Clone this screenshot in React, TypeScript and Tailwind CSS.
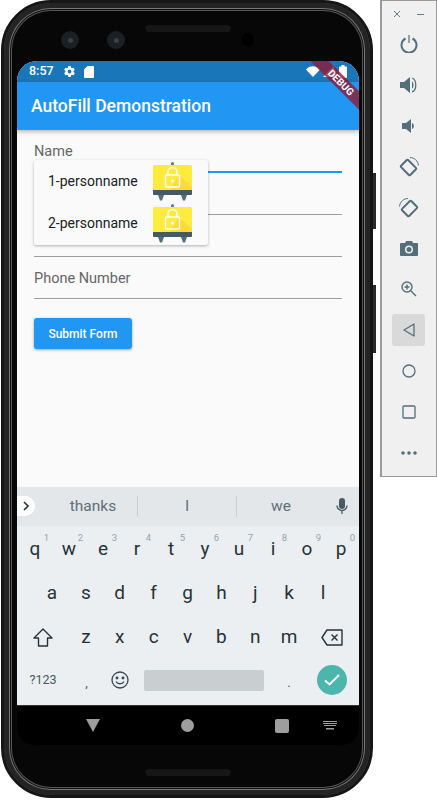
import React from 'react'

const row1 = [['q', '1'], ['w', '2'], ['e', '3'], ['r', '4'], ['t', '5'], ['y', '6'], ['u', '7'], ['i', '8'], ['o', '9'], ['p', '0']]
const row2 = ['a', 's', 'd', 'f', 'g', 'h', 'j', 'k', 'l']
const row3 = ['z', 'x', 'c', 'v', 'b', 'n', 'm']

const LockIcon = () => (
    <svg width="40" height="40" viewBox="0 0 40 40" className="shrink-0">
        <rect x="18" y="1" width="3" height="5" rx="1.5" fill="#607d8b" />
        <path d="M5 34 L7 39.500 L9 39.500 L11 34Z M34 34 L32 39.500 L30 39.500 L28 34Z" fill="#546e7a" />
        <path d="M0 5.500 a1.500 1.500 0 0 1 1.500 -1.500 h36 a1.500 1.500 0 0 1 1.500 1.500 V29 H0Z" fill="#ffeb3b" />
        <path d="M26 14 L39 26 V29 H17Z" fill="#fbc02d" opacity="0.4" />
        <path d="M0 29 H39 V33 a1 1 0 0 1 -1 1 H1 a1 1 0 0 1 -1 -1Z" fill="#455a64" />
        <rect x="12.500" y="14" width="14" height="12" rx="1.500" fill="none" stroke="#ffffff" strokeWidth="1.500" />
        <path d="M15 14 V11 a4.500 4.500 0 0 1 9 0 V14" fill="none" stroke="#ffffff" strokeWidth="1.500" />
        <circle cx="19.500" cy="20" r="1.500" fill="#ffffff" />
    </svg>
)

const Field = ({ label, line }: { label?: string; line: string }) => (
    <div className={`h-[42px] flex flex-col justify-end ${line}`}>
        {label && <span className="text-[14.5px] leading-[20px] text-[#666] mb-[9px]">{label}</span>}
    </div>
)

const Key = ({ k, sup }: { k: string; sup?: string }) => (
    <div className="relative flex-1 flex items-center justify-center text-[19px] text-[#263238]">
        {k}
        {sup && <span className="absolute right-[3px] top-[3px] text-[9.5px] text-[#90a4ae]">{sup}</span>}
    </div>
)

const Tool = ({ children, active }: { children: React.ReactNode; active?: boolean }) => (
    <div className={`h-[32px] w-[33px] flex items-center justify-center rounded-[3px] ${active ? 'bg-[#d9d9d9]' : ''}`}>
        {children}
    </div>
)

const App: React.FC = () => {
    return (
        <div className="w-[437px] h-[800px] bg-white flex items-start overflow-hidden font-['Roboto',sans-serif]">
            <div className="relative ml-[1px] w-[372px] h-[798px] rounded-[50px] bg-[#070707] border-[3px] border-[#161616] shadow-[inset_0_0_0_5px_#242424,inset_0_0_0_6px_#777,inset_0_0_0_7px_#111,inset_0_0_0_8px_#555] pt-[58px] px-[13px] shrink-0">
                {/* camera + speakers */}
                <span className="absolute left-[57px] top-[28px] w-[18px] h-[18px] rounded-full bg-[#1b2025] flex items-center justify-center">
                    <span className="w-[5px] h-[5px] rounded-full bg-[#3a4046]" />
                </span>
                <span className="absolute left-[103px] top-[28px] w-[18px] h-[18px] rounded-full bg-[#1b2025] flex items-center justify-center">
                    <span className="w-[5px] h-[5px] rounded-full bg-[#3a4046]" />
                </span>
                <span className="absolute left-[237px] top-[30px] w-[13px] h-[13px] rounded-full bg-black" />
                <span className="absolute left-[141px] top-[22px] w-[86px] h-[7px] rounded-full bg-[#161616]" />
                <span className="absolute left-[141px] top-[766px] w-[86px] h-[7px] rounded-full bg-[#161616]" />
                {/* side buttons */}
                <span className="absolute left-[369px] top-[170px] w-[3px] h-[56px] bg-[#2a2a2a]" />
                <span className="absolute left-[369px] top-[282px] w-[3px] h-[68px] bg-[#2a2a2a]" />

                <div className="relative w-[342px] h-[644px] rounded-t-[20px] overflow-hidden bg-[#fafafa] flex flex-col">
                    {/* status bar */}
                    <div className="h-[21px] bg-[#1976b8] flex items-center px-[12px] text-white shrink-0">
                        <span className="text-[12.5px] font-medium mr-[9px]">8:57</span>
                        <svg width="13" height="13" viewBox="0 0 24 24" fill="white" className="mr-[8px]">
                            <path d="M19.4 13c.04-.3.06-.65.06-1s-.02-.7-.07-1l2.1-1.65a.5.5 0 0 0 .12-.64l-2-3.46a.5.5 0 0 0-.6-.22l-2.5 1a7.3 7.3 0 0 0-1.7-1l-.37-2.65A.5.5 0 0 0 14 2h-4a.5.5 0 0 0-.5.42l-.37 2.65c-.6.25-1.17.58-1.7 1l-2.5-1a.5.5 0 0 0-.6.22l-2 3.46a.5.5 0 0 0 .12.64L4.57 11a8 8 0 0 0 0 2l-2.1 1.65a.5.5 0 0 0-.12.64l2 3.46c.12.22.38.3.6.22l2.5-1c.53.4 1.1.74 1.7 1l.37 2.65A.5.5 0 0 0 10 22h4a.5.5 0 0 0 .5-.42l.37-2.65c.6-.25 1.17-.58 1.7-1l2.5 1c.22.08.48 0 .6-.22l2-3.46a.5.5 0 0 0-.12-.64ZM12 15.5a3.5 3.5 0 1 1 0-7 3.5 3.5 0 0 1 0 7Z" />
                        </svg>
                        <svg width="10" height="12" viewBox="0 0 10 12" fill="white">
                            <path d="M3.5 0H9a1 1 0 0 1 1 1v10a1 1 0 0 1-1 1H1a1 1 0 0 1-1-1V3.5Z" />
                        </svg>
                        <div className="ml-auto flex items-center gap-[3px]">
                            <svg width="14" height="11" viewBox="0 0 14 11" fill="white"><path d="M0 3.500C4-.8 10-.8 14 3.500L7 11Z" /></svg>
                            <svg width="11" height="11" viewBox="0 0 11 11" fill="white"><path d="M11 0V11H0Z" /></svg>
                            <svg width="8" height="13" viewBox="0 0 8 13" fill="white" className="ml-[2px]"><path d="M2.500 0h3v1.500H7a1 1 0 0 1 1 1V12a1 1 0 0 1-1 1H1a1 1 0 0 1-1-1V2.500a1 1 0 0 1 1-1h1.500Z" /></svg>
                        </div>
                    </div>
                    {/* app bar */}
                    <div className="h-[48px] bg-[#2196f3] flex items-center px-[14px] pt-[1px] shadow-[0_2px_4px_rgba(0,0,0,0.25)] shrink-0 z-10">
                        <span className="text-[17.5px] font-medium text-white">AutoFill Demonstration</span>
                    </div>
                    {/* debug banner */}
                    <div className="absolute z-20 top-[15px] right-[-27px] w-[90px] h-[13px] rotate-45 bg-[#8e1a3a]/80 flex items-center justify-center">
                        <span className="text-[10px] font-bold text-white leading-none">DEBUG</span>
                    </div>
                    {/* form */}
                    <div className="relative flex-1 px-[17px] pt-[1px]">
                        <Field label="Name" line="border-b-2 border-[#2196f3]" />
                        <Field line="border-b border-[#9e9e9e]" />
                        <Field line="border-b border-[#9e9e9e]" />
                        <Field label="Phone Number" line="border-b border-[#9e9e9e]" />
                        <button className="mt-[19px] w-[98px] h-[31px] bg-[#2196f3] rounded-[3px] text-white text-[12px] font-medium shadow-[0_1px_3px_rgba(0,0,0,0.35)]">
                            Submit Form
                        </button>
                        {/* autofill popup */}
                        <div className="absolute left-[17px] top-[30px] w-[174px] h-[85px] bg-[#fafafa] rounded-[2px] shadow-[0_1px_3px_rgba(0,0,0,0.3)] flex flex-col">
                            <div className="h-[42px] flex items-center pl-[14px] pr-[15px] justify-between text-[14px] text-[#212121]">
                                1-personname
                                <LockIcon />
                            </div>
                            <div className="h-[42px] flex items-center pl-[14px] pr-[15px] justify-between text-[14px] text-[#212121]">
                                2-personname
                                <LockIcon />
                            </div>
                        </div>
                    </div>
                    {/* keyboard */}
                    <div className="h-[218px] bg-[#eceff1] flex flex-col shrink-0">
                        <div className="h-[39px] bg-[#e4e7e9] flex items-center text-[15.5px] text-[#5f6f78] relative">
                            <div className="absolute left-0 top-[9px] w-[18px] h-[20px] bg-white rounded-r-full flex items-center justify-center">
                                <svg width="8" height="10" viewBox="0 0 8 10" fill="none" stroke="#263238" strokeWidth="1.6"><path d="M2 1l4 4-4 4" /></svg>
                            </div>
                            <span className="w-[120px] text-center pl-[32px]">thanks</span>
                            <span className="w-px h-[21px] bg-[#c8cdd0]" />
                            <span className="w-[98px] text-center">I</span>
                            <span className="w-px h-[21px] bg-[#c8cdd0]" />
                            <span className="w-[88px] text-center">we</span>
                            <svg width="12" height="17" viewBox="0 0 12 17" fill="none" className="ml-[11px]">
                                <rect x="3" y="0" width="6" height="11" rx="3" fill="#455a64" />
                                <path d="M1 7.500a5 5 0 0 0 10 0M6 12.500V16" stroke="#455a64" strokeWidth="1.300" />
                            </svg>
                        </div>
                        <div className="h-[43px] mt-[2px] flex px-[1px]">
                            {row1.map(([k, s]) => <Key key={k} k={k} sup={s} />)}
                        </div>
                        <div className="h-[44px] flex pl-[18px] pr-[19px]">
                            {row2.map(k => <Key key={k} k={k} />)}
                        </div>
                        <div className="h-[45px] flex">
                            <div className="w-[52px] flex items-center justify-center">
                                <svg width="20" height="19" viewBox="0 0 20 19" fill="none" stroke="#263238" strokeWidth="1.400" strokeLinejoin="round"><path d="M10 1l9 9h-4.500v8h-9v-8H1Z" /></svg>
                            </div>
                            {row3.map(k => <Key key={k} k={k} />)}
                            <div className="w-[53px] pr-[2px] flex items-center justify-center">
                                <svg width="22" height="17" viewBox="0 0 22 17" fill="none" stroke="#263238" strokeWidth="1.400" strokeLinejoin="round"><path d="M6 1h15v15H6L1 8.500Z" /><path d="M10.500 5.500l6 6M16.500 5.500l-6 6" /></svg>
                            </div>
                        </div>
                        <div className="h-[40px] flex items-center">
                            <span className="w-[52px] text-center text-[12.5px] text-[#455a64]">?123</span>
                            <span className="w-[35px] text-center text-[13px] text-[#455a64] pt-[6px]">,</span>
                            <div className="w-[32px] flex justify-center">
                                <svg width="18" height="18" viewBox="0 0 18 18" fill="none" stroke="#37474f" strokeWidth="1.300"><circle cx="9" cy="9" r="8" /><path d="M5 10.500c1.500 3 6.500 3 8 0" /><circle cx="6" cy="7" r=".8" fill="#37474f" /><circle cx="12" cy="7" r=".8" fill="#37474f" /></svg>
                            </div>
                            <div className="ml-[8px] w-[120px] h-[21px] bg-[#c9ced0] rounded-[2px]" />
                            <span className="w-[50px] text-center text-[13px] text-[#455a64] pt-[6px]">.</span>
                            <div className="ml-[3px] w-[30px] h-[30px] rounded-full bg-[#4db6ac] flex items-center justify-center">
                                <svg width="16" height="12" viewBox="0 0 16 12" fill="none" stroke="white" strokeWidth="2"><path d="M1 6.500l4.500 4L15 1" /></svg>
                            </div>
                        </div>
                    </div>
                </div>
                {/* nav bar */}
                <div className="w-[342px] h-[40px] bg-black rounded-b-[18px] border-t border-[#333] flex items-center">
                    <svg width="14" height="13" viewBox="0 0 14 13" fill="#9e9e9e" className="ml-[69px]"><path d="M0 0h14L7 13Z" /></svg>
                    <span className="ml-[81px] w-[13px] h-[13px] rounded-full bg-[#9e9e9e]" />
                    <span className="ml-[81px] w-[14px] h-[14px] rounded-[2px] bg-[#9e9e9e]" />
                    <svg width="14" height="9" viewBox="0 0 14 9" fill="#9e9e9e" className="ml-[34px]"><path d="M0 0h14v1H0ZM0 2h14v1H0ZM1 4h12v1H1ZM3 7h8v1.500H3Z" /></svg>
                </div>
            </div>

            {/* emulator toolbar */}
            <div className="ml-[7px] w-[57px] h-[477px] bg-[#f0f0f0] border border-l-2 border-[#9a9a9a] flex flex-col items-center pr-[1px] shrink-0">
                <div className="h-[26px] w-full flex items-center justify-between px-[11px] text-[#607d8b]">
                    <svg width="8" height="8" viewBox="0 0 8 8" stroke="currentColor" strokeWidth="1"><path d="M1 1l6 6M7 1l-6 6" /></svg>
                    <span className="w-[7px] h-px bg-current" />
                </div>
                <div className="flex flex-col items-center gap-[8.9px] mt-[1px]">
                    <Tool>
                        <svg width="18" height="18" viewBox="0 0 18 18" fill="none" stroke="#546e7a" strokeWidth="2"><path d="M5.500 3.500a7.500 7.500 0 1 0 7 0" /><path d="M9 0v8" strokeWidth="1.200" /></svg>
                    </Tool>
                    <Tool>
                        <svg width="18" height="16" viewBox="0 0 18 16" fill="#546e7a"><path d="M0 5h4l6-5v16l-6-5H0Z" /><path d="M12 4.500c2 1 2 6 0 7Z" /><path d="M12 1c5 1.500 5 12.500 0 14" fill="none" stroke="#546e7a" strokeWidth="1.300" /></svg>
                    </Tool>
                    <Tool>
                        <svg width="14" height="14" viewBox="0 0 14 14" fill="#546e7a"><path d="M0 4h4l5-4v14l-5-4H0Z" /><path d="M10 4c2.500 1 2.500 5 0 6Z" /></svg>
                    </Tool>
                    <Tool>
                        <svg width="22" height="22" viewBox="0 0 22 22" fill="none" stroke="#546e7a"><rect x="4" y="6.500" width="13" height="10" rx="1" strokeWidth="2" transform="rotate(45 10.500 11.500)" /><path d="M12 1.500c4 0 8 3 8.500 8" strokeWidth="1" /></svg>
                    </Tool>
                    <Tool>
                        <svg width="22" height="22" viewBox="0 0 22 22" fill="none" stroke="#546e7a"><rect x="5" y="6.500" width="13" height="10" rx="1" strokeWidth="2" transform="rotate(-45 11.500 11.500)" /><path d="M10 1.500c-4 0-8 3-8.500 8" strokeWidth="1" /></svg>
                    </Tool>
                    <Tool>
                        <svg width="18" height="15" viewBox="0 0 18 15" fill="#546e7a"><path fillRule="evenodd" d="M5 2l1-2h6l1 2h4a1 1 0 0 1 1 1v11a1 1 0 0 1-1 1H1a1 1 0 0 1-1-1V3a1 1 0 0 1 1-1Zm4 2.500a4 4 0 1 0 0 8 4 4 0 0 0 0-8Zm0 1.500a2.500 2.500 0 1 1 0 5 2.500 2.500 0 0 1 0-5Z" /></svg>
                    </Tool>
                    <Tool>
                        <svg width="16" height="16" viewBox="0 0 16 16" fill="none" stroke="#546e7a" strokeWidth="1.400"><circle cx="6" cy="6" r="5" /><path d="M9.500 9.500L15 15M6 3.500v5M3.500 6h5" /></svg>
                    </Tool>
                    <Tool active>
                        <svg width="12" height="14" viewBox="0 0 12 14" fill="none" stroke="#546e7a" strokeWidth="1.300" strokeLinejoin="round"><path d="M11 1v12L1 7Z" /></svg>
                    </Tool>
                    <Tool>
                        <svg width="14" height="14" viewBox="0 0 14 14" fill="none" stroke="#546e7a" strokeWidth="1.300"><circle cx="7" cy="7" r="6" /></svg>
                    </Tool>
                    <Tool>
                        <svg width="14" height="14" viewBox="0 0 14 14" fill="none" stroke="#546e7a" strokeWidth="1.300"><rect x="1" y="1" width="12" height="12" rx="1" /></svg>
                    </Tool>
                    <Tool>
                        <svg width="16" height="4" viewBox="0 0 16 4" fill="#546e7a"><circle cx="2" cy="2" r="1.800" /><circle cx="8" cy="2" r="1.800" /><circle cx="14" cy="2" r="1.800" /></svg>
                    </Tool>
                </div>
            </div>
        </div>
    )
}

export default App
